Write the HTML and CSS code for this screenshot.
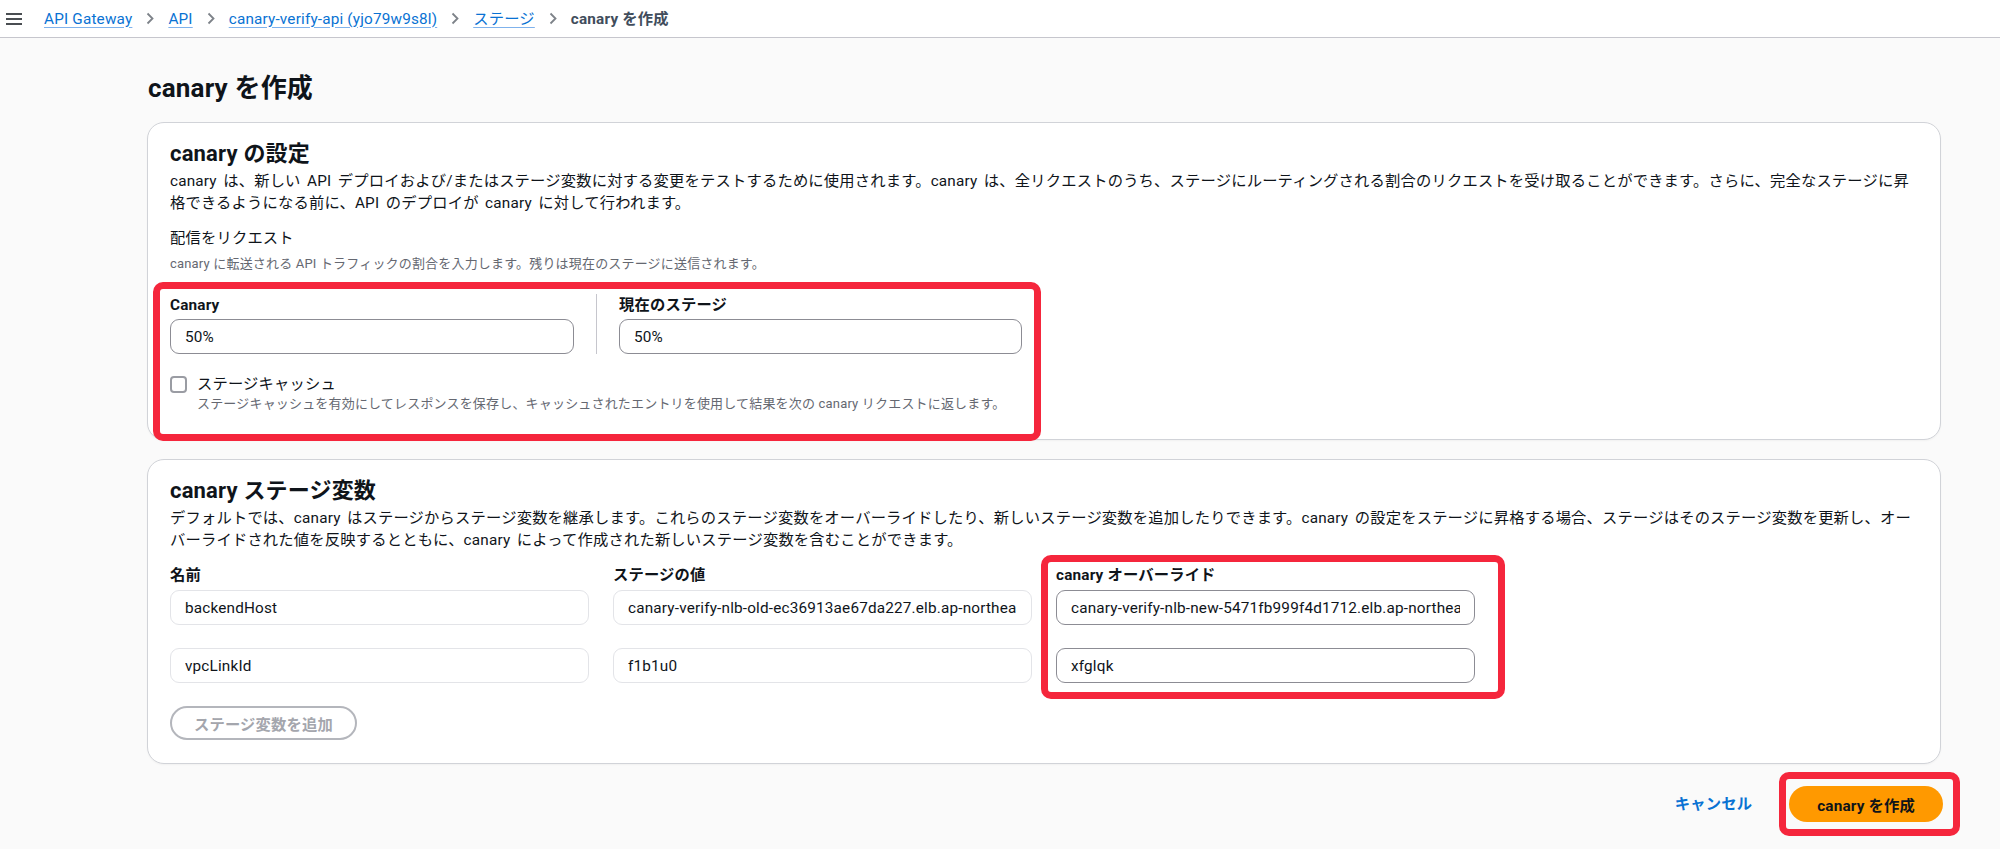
FILE: index.html
```html
<!DOCTYPE html>
<html lang="ja">
<head>
    <meta charset="UTF-8">
    <meta name="viewport" content="width=device-width, initial-scale=1.0">
    <title>canary を作成</title>
    <link rel="stylesheet" href="styles.css">
</head>
<body>

<!-- Top bar with breadcrumbs -->
<header class="topbar">
    <svg class="menu-icon" width="16" height="12" viewBox="0 0 16 12" aria-hidden="true">
        <path d="M0 1h16M0 6h16M0 11h16" stroke="#0f141a" stroke-width="1.5" fill="none"/>
    </svg>
    <nav class="breadcrumbs">
        <a href="#">API Gateway</a>
        <svg class="chevron" width="8" height="13" viewBox="0 0 8 13"><path d="M1.5 1.5l5 5-5 5" stroke="#7d8289" stroke-width="1.8" fill="none"/></svg>
        <a href="#">API</a>
        <svg class="chevron" width="8" height="13" viewBox="0 0 8 13"><path d="M1.5 1.5l5 5-5 5" stroke="#7d8289" stroke-width="1.8" fill="none"/></svg>
        <a href="#">canary-verify-api (yjo79w9s8l)</a>
        <svg class="chevron" width="8" height="13" viewBox="0 0 8 13"><path d="M1.5 1.5l5 5-5 5" stroke="#7d8289" stroke-width="1.8" fill="none"/></svg>
        <a href="#">ステージ</a>
        <svg class="chevron" width="8" height="13" viewBox="0 0 8 13"><path d="M1.5 1.5l5 5-5 5" stroke="#7d8289" stroke-width="1.8" fill="none"/></svg>
        <span class="current">canary を作成</span>
    </nav>
</header>

<main class="page">
    <h1>canary を作成</h1>

    <!-- Canary settings -->
    <section class="card">
        <h2>canary の設定</h2>
        <p class="card-desc">canary は、新しい API デプロイおよび/またはステージ変数に対する変更をテストするために使用されます。canary は、全リクエストのうち、ステージにルーティングされる割合のリクエストを受け取ることができます。さらに、完全なステージに昇格できるようになる前に、API のデプロイが canary に対して行われます。</p>

        <div class="field-label">配信をリクエスト</div>
        <div class="field-desc">canary に転送される API トラフィックの割合を入力します。残りは現在のステージに送信されます。</div>

        <div class="highlight highlight-traffic">
            <div class="split">
                <div class="split-col">
                    <label class="input-label">Canary</label>
                    <input class="text-input" type="text" value="50%">
                </div>
                <div class="split-col split-col-right">
                    <label class="input-label">現在のステージ</label>
                    <input class="text-input" type="text" value="50%">
                </div>
            </div>

            <div class="check-row">
                <span class="checkbox"></span>
                <div>
                    <div class="check-label">ステージキャッシュ</div>
                    <div class="check-desc">ステージキャッシュを有効にしてレスポンスを保存し、キャッシュされたエントリを使用して結果を次の canary リクエストに返します。</div>
                </div>
            </div>
        </div>
    </section>

    <!-- Canary stage variables -->
    <section class="card">
        <h2>canary ステージ変数</h2>
        <p class="card-desc">デフォルトでは、canary はステージからステージ変数を継承します。これらのステージ変数をオーバーライドしたり、新しいステージ変数を追加したりできます。canary の設定をステージに昇格する場合、ステージはそのステージ変数を更新し、オーバーライドされた値を反映するとともに、canary によって作成された新しいステージ変数を含むことができます。</p>

        <div class="vars">
            <div class="vars-col">
                <label class="input-label">名前</label>
                <input class="text-input readonly" type="text" value="backendHost" readonly>
                <input class="text-input readonly" type="text" value="vpcLinkId" readonly>
            </div>
            <div class="vars-col">
                <label class="input-label">ステージの値</label>
                <input class="text-input readonly" type="text" value="canary-verify-nlb-old-ec36913ae67da227.elb.ap-northeast-1.amazonaws.com" readonly>
                <input class="text-input readonly" type="text" value="f1b1u0" readonly>
            </div>
            <div class="vars-col highlight highlight-override">
                <label class="input-label">canary オーバーライド</label>
                <input class="text-input" type="text" value="canary-verify-nlb-new-5471fb999f4d1712.elb.ap-northeast-1.amazonaws.com">
                <input class="text-input" type="text" value="xfglqk">
            </div>
        </div>

        <button class="add-btn" disabled>ステージ変数を追加</button>
    </section>

    <!-- Actions -->
    <div class="actions">
        <a href="#" class="cancel-link">キャンセル</a>
        <span class="highlight highlight-submit">
            <button class="primary-btn">canary を作成</button>
        </span>
    </div>
</main>

</body>
</html>
```

FILE: styles.css
```css
* {
    box-sizing: border-box;
}

body {
    margin: 0;
    font-family: Roboto, "Noto Sans CJK JP", sans-serif;
    font-size: 15.3px;
    line-height: 22px;
    letter-spacing: 0.18px;
    color: #0f141a;
    background-color: #fafafa;
}

/* top bar */
.topbar {
    height: 38px;
    display: flex;
    align-items: center;
    padding-left: 6px;
    background-color: #ffffff;
    border-bottom: 1px solid #c6c6cd;
}

.menu-icon {
    margin-right: 22px;
}

.breadcrumbs {
    display: flex;
    align-items: center;
}

.breadcrumbs a {
    color: #0972d3;
    text-decoration: underline;
    text-decoration-color: #7fb2ec;
    text-underline-offset: 3px;
}

.chevron {
    margin: 0 14px;
}

.breadcrumbs .current {
    color: #414d5c;
    font-weight: 700;
}

/* page */
.page {
    padding: 0 59px 19px 147px;
}

h1 {
    margin: 34px 0 18px 1px;
    font-size: 26px;
    line-height: 32px;
    font-weight: 700;
}

.card {
    background-color: #ffffff;
    border: 1px solid #d1d3d8;
    border-radius: 17px;
    padding: 18px 22px 26px;
    box-shadow: 0 1px 2px rgba(0, 0, 0, 0.04);
}

.card + .card {
    margin-top: 19px;
    padding-bottom: 23px;
}

.card h2 {
    margin: 0;
    font-size: 22px;
    line-height: 26px;
    font-weight: 700;
}

.card-desc {
    margin: 3px 0 0;
    word-spacing: 2.5px;
}

.field-label {
    margin-top: 13px;
}

.field-desc {
    margin-top: 6px;
    font-size: 13px;
    line-height: 18px;
    color: #656871;
}

/* red annotation frames */
.highlight {
    outline: 7px solid #f5263c;
    border-radius: 3px;
}

.highlight-traffic {
    width: 874px;
    margin: 16px 0 -21px -10px;
    padding: 5px 12px 21px 10px;
}

.split {
    display: grid;
    grid-template-columns: 1fr 1fr;
}

.split-col {
    padding-right: 22px;
}

.split-col-right {
    padding: 0 0 0 22px;
    border-left: 1px solid #c6c6cd;
}

.input-label {
    display: block;
    font-weight: 700;
}

.text-input {
    display: block;
    width: 100%;
    height: 35px;
    margin-top: 3px;
    padding: 0 14px;
    font-family: inherit;
    font-size: 15.3px;
    letter-spacing: inherit;
    color: #0f141a;
    background-color: #ffffff;
    border: 1px solid #8c8c94;
    border-radius: 9px;
    outline: none;
}

.text-input.readonly {
    border-color: #e3e4e8;
}

.check-row {
    display: flex;
    margin-top: 19px;
}

.checkbox {
    flex: none;
    width: 17px;
    height: 17px;
    margin: 3px 10px 0 0;
    border: 2px solid #9a9ca3;
    border-radius: 4px;
}

.check-desc {
    font-size: 13px;
    line-height: 18px;
    color: #656871;
}

/* stage variables */
.vars {
    display: grid;
    grid-template-columns: repeat(3, 419px);
    column-gap: 24px;
    margin-top: 13px;
}

.vars-col .text-input {
    margin-top: 4px;
}

.vars-col .text-input + .text-input {
    margin-top: 23px;
}

.highlight-override {
    margin: -2px -23px -9px -8px;
    padding: 2px 23px 9px 8px;
}

.add-btn {
    display: block;
    margin-top: 23px;
    height: 34px;
    padding: 0 22px;
    font-family: inherit;
    font-size: 15.3px;
    font-weight: 700;
    letter-spacing: inherit;
    color: #a4a6ad;
    background-color: #ffffff;
    border: 2px solid #b4b6bc;
    border-radius: 20px;
}

/* actions */
.actions {
    display: flex;
    justify-content: flex-end;
    align-items: center;
    margin: 15px -12px 0 0;
}

.cancel-link {
    margin-right: 34px;
    color: #0972d3;
    font-weight: 700;
    text-decoration: none;
}

.highlight-submit {
    display: block;
    padding: 7px 10px 7px 3px;
}

.primary-btn {
    display: block;
    height: 36px;
    padding: 0 28px;
    font-family: inherit;
    font-size: 15.3px;
    font-weight: 700;
    letter-spacing: inherit;
    color: #0f141a;
    background-color: #ff9900;
    border: none;
    border-radius: 20px;
}
```
